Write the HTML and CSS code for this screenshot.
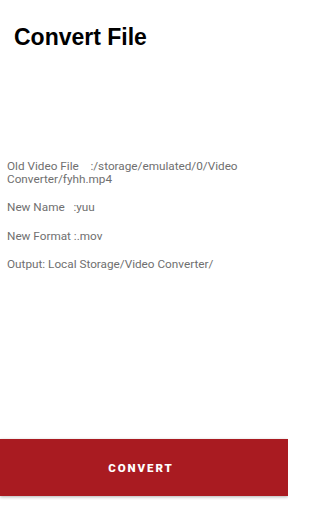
FILE: index.html
```html
<!DOCTYPE html>
<html lang="en">
<head>
<meta charset="utf-8">
<title>Convert File</title>
<link rel="stylesheet" href="styles.css">
</head>
<body>
<div class="screen">
  <h1 class="title">Convert File</h1>
  <div class="info">
    <p class="row">Old Video File    :/storage/emulated/0/Video Converter/fyhh.mp4</p>
    <p class="row">New Name   :yuu</p>
    <p class="row">New Format :.mov</p>
    <p class="row">Output: Local Storage/Video Converter/</p>
  </div>
  <button class="convert" type="button">CONVERT</button>
</div>
</body>
</html>
```

FILE: styles.css
```css
html, body {
  margin: 0;
  padding: 0;
  background: #ffffff;
}
.screen {
  width: 288px;
  height: 512px;
  display: flex;
  flex-direction: column;
  font-family: Roboto, "Noto Sans", sans-serif;
  overflow: hidden;
}
.title {
  margin: 25px 0 0 14px;
  font-family: "Liberation Sans", Arial, sans-serif;
  font-size: 23px;
  line-height: 24px;
  font-weight: 700;
  color: #000000;
}
.info {
  margin: 111px 7px 0 7px;
  display: flex;
  flex-direction: column;
  gap: 16px;
}
.row {
  margin: 0;
  font-size: 11.75px;
  line-height: 12.5px;
  color: #6f6f6f;
  white-space: pre-wrap;
}
.convert {
  margin-top: auto;
  margin-bottom: 16.5px;
  height: 56.5px;
  width: 100%;
  border: none;
  background: #a91b21;
  color: #ffffff;
  font-family: Roboto, sans-serif;
  font-weight: 900;
  font-size: 11.5px;
  letter-spacing: 1.9px;
  box-shadow: 0 1px 3px rgba(0, 0, 0, 0.3);
  padding: 2px 0 0 0;
  text-indent: -6px;
}
```
